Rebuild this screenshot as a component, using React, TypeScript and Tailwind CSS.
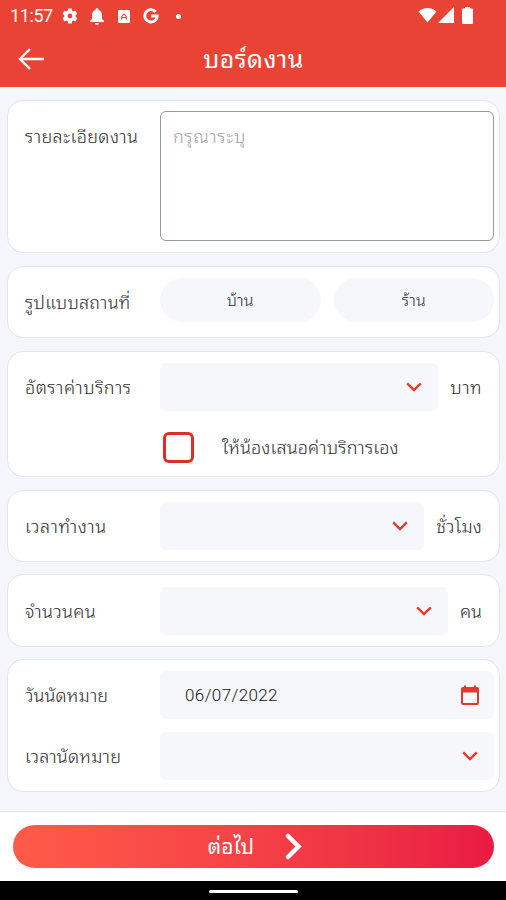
import React from 'react';

interface RowLabelProps {
  text: string;
  className?: string;
}

const RowLabel: React.FC<RowLabelProps> = ({ text, className = 'tracking-[0.35px]' }) => (
  <div className={`w-[135px] h-12 shrink-0 flex items-center whitespace-nowrap pt-px text-[18px] font-light text-[#2c2c2c] ${className}`}>
    <span>{text}</span>
  </div>
);

const Card: React.FC<{ className: string; children: React.ReactNode }> = ({ className, children }) => (
  <section className={`bg-white border border-[#e2e4ee] rounded-2xl pl-[17px] pr-[5px] pt-[11px] ${className}`}>
    {children}
  </section>
);

const Chevron: React.FC = () => (
  <svg width="16" height="10" viewBox="0 0 16 10" fill="none" stroke="#e5382c" strokeWidth="2.4" className="shrink-0">
    <path d="M1.2 1.3L8 8L14.8 1.3" />
  </svg>
);

const SelectField: React.FC = () => (
  <button className="flex-1 h-12 pr-4 rounded-md bg-[#f5f7fb] flex items-center justify-end">
    <Chevron />
  </button>
);

const Unit: React.FC<{ text: string; className: string }> = ({ text, className }) => (
  <span className={`shrink-0 whitespace-nowrap text-right pt-px text-[18px] font-light text-[#2c2c2c] pr-3 ${className}`}>{text}</span>
);

const StatusBar: React.FC = () => (
  <div className="h-8 pl-[10px] pr-[33px] flex items-center justify-between">
    <div className="flex items-center">
      <span className="w-[51px] text-[18px] leading-8 tracking-[-0.4px]">11:57</span>
      <svg width="18" height="18" viewBox="0 0 24 24" fill="white">
        <path d="M19.4 13a7.7 7.7 0 0 0 0-2l2.1-1.65a.5.5 0 0 0 .1-.64l-2-3.46a.5.5 0 0 0-.6-.22l-2.5 1a7.3 7.3 0 0 0-1.7-.98l-.4-2.65A.5.5 0 0 0 13.9 2h-4a.5.5 0 0 0-.5.42l-.4 2.63c-.6.25-1.2.58-1.7.98l-2.5-1a.5.5 0 0 0-.6.22l-2 3.46a.5.5 0 0 0 .1.64L4.4 11a7.7 7.7 0 0 0 0 2l-2.1 1.65a.5.5 0 0 0-.1.64l2 3.46c.1.22.4.3.6.22l2.5-1c.5.4 1.1.73 1.7.98l.4 2.63c0 .24.2.42.5.42h4c.2 0 .5-.18.5-.42l.4-2.63c.6-.25 1.2-.58 1.7-.98l2.5 1c.2.08.5 0 .6-.22l2-3.46a.5.5 0 0 0-.1-.64zM12 15.2a3.2 3.2 0 1 1 0-6.4a3.2 3.2 0 0 1 0 6.4z" />
      </svg>
      <svg width="16" height="18" viewBox="0 0 16 18" fill="white" className="ml-[10px]">
        <path d="M8 1a1.500 1.500 0 0 1 1.500 1.500v.5C12 3.700 13 5.800 13 8v4l2 2v1H1v-1l2-2V8c0-2.200 1-4.300 3.500-5v-.5A1.500 1.500 0 0 1 8 1zM6 16h4a2 2 0 0 1-4 0z" />
      </svg>
      <svg width="12" height="13" viewBox="0 0 12 13" className="ml-[13px]">
        <rect width="12" height="13" rx="1" fill="white" />
        <path d="M3.700 9.500V6.500L6 4L8.300 6.500V9.500M4 7.500H8" fill="none" stroke="#e84335" strokeWidth="1.1" />
      </svg>
      <svg width="16" height="16" viewBox="0 0 16 16" fill="none" stroke="white" strokeWidth="2.9" className="ml-[13px]">
        <path d="M12.700 3.800A6.200 6.200 0 1 0 14.200 8H8.300" />
      </svg>
      <span className="ml-[17px] size-[5px] rounded-full bg-white" />
    </div>
    <div className="flex items-center -mt-0.5">
      <svg width="19" height="16" viewBox="0 0 19 16" fill="white">
        <path d="M9.500 15.500L.5 4.500C5.500-.3 13.500-.3 18.500 4.500z" />
      </svg>
      <svg width="16" height="16" viewBox="0 0 16 16" fill="white" className="ml-px">
        <path d="M0 16L16 0V16z" />
      </svg>
      <svg width="11" height="17" viewBox="0 0 11 17" fill="white" className="ml-2">
        <path d="M3 1.500V0h5v1.500h2a1 1 0 0 1 1 1V16a1 1 0 0 1-1 1H1a1 1 0 0 1-1-1V2.500a1 1 0 0 1 1-1z" />
      </svg>
    </div>
  </div>
);

export default function App() {
  return (
    <div className="w-[506px] h-[900px] overflow-hidden flex flex-col bg-[#f5f6fb] font-['Roboto','Noto_Sans_Thai_Looped','Loma','Garuda','Noto_Sans_Thai','Noto_Sans',sans-serif]">
      <header className="h-[87px] shrink-0 bg-[#e84335] text-white">
        <StatusBar />
        <div className="h-[54px] grid grid-cols-[1fr_auto_1fr] items-center">
          <button className="pl-[18px]">
            <svg width="27" height="22" viewBox="0 0 27 22" fill="none" stroke="white" strokeWidth="2.4">
              <path d="M26 11H2M12 1L2 11L12 21" />
            </svg>
          </button>
          <h1 className="pt-0.5 pl-px text-[25px] leading-9 tracking-[0.4px] font-normal">บอร์ดงาน</h1>
        </div>
      </header>

      <main className="flex-1 pt-[13px] pl-[7px] pr-[6px] flex flex-col gap-[13px]">
        <Card className="h-[153px] flex">
          <RowLabel text="รายละเอียดงาน" className="tracking-[0.4px]" />
          <textarea
            placeholder="กรุณาระบุ"
            className="flex-1 h-[130px] -mt-px resize-none border border-[#949a98] rounded-md px-3 py-[13px] text-[18px] leading-6 tracking-[0.6px] font-light outline-none placeholder:text-[#a3a3a3]"
          />
        </Card>

        <Card className="h-[72px] flex">
          <RowLabel text="รูปแบบสถานที่" className="tracking-[0.25px]" />
          <div className="flex-1 flex gap-[13px]">
            <button className="flex-1 h-11 pt-0.5 rounded-full bg-[#f5f7fb] text-[16px] tracking-[0.2px] font-light text-[#2c2c2c]">บ้าน</button>
            <button className="flex-1 h-11 pt-0.5 rounded-full bg-[#f5f7fb] text-[16px] tracking-[0.2px] font-light text-[#2c2c2c]">ร้าน</button>
          </div>
        </Card>

        <Card className="h-[126px]">
          <div className="flex items-center">
            <RowLabel text="อัตราค่าบริการ" className="tracking-[0.5px]" />
            <SelectField />
            <Unit text="บาท" className="w-[56px] tracking-[0.5px]" />
          </div>
          <div className="flex items-center h-[73px] pl-[138px]">
            <span className="size-[31px] rounded-md border-[3px] border-[#dc2e22]" />
            <span className="ml-[28px] text-[18px] tracking-[0.15px] font-light text-[#2c2c2c] whitespace-nowrap">ให้น้องเสนอค่าบริการเอง</span>
          </div>
        </Card>

        <Card className="h-[72px] flex items-center pb-[11px]">
          <RowLabel text="เวลาทำงาน" className="tracking-[0.6px]" />
          <SelectField />
          <Unit text="ชั่วโมง" className="w-[70px] tracking-[0.2px]" />
        </Card>

        <Card className="h-[73px] -mt-px flex items-center pb-[11px]">
          <RowLabel text="จำนวนคน" />
          <SelectField />
          <Unit text="คน" className="w-[46px] tracking-normal" />
        </Card>

        <Card className="h-[133px] -mt-px flex flex-col gap-[13px]">
          <div className="flex">
            <RowLabel text="วันนัดหมาย" className="tracking-[0.1px]" />
            <div className="flex-1 h-12 rounded-md bg-[#f5f7fb] pl-[25px] pr-[14px] flex items-center justify-between">
              <span className="pt-0.5 text-[17px] tracking-[0.4px] font-light text-[#111]">06/07/2022</span>
              <svg width="20" height="21" viewBox="0 0 20 21" fill="#e5382c">
                <path fillRule="evenodd" d="M4 .500h2v1.500h8V.500h2v1.500h1a2 2 0 0 1 2 2v14a2 2 0 0 1-2 2H3a2 2 0 0 1-2-2V4a2 2 0 0 1 2-2h1zM3 7.500v10.500h14V7.500z" />
              </svg>
            </div>
          </div>
          <div className="flex">
            <RowLabel text="เวลานัดหมาย" className="tracking-[0.2px]" />
            <SelectField />
          </div>
        </Card>
      </main>

      <footer className="h-[70px] shrink-0 bg-white border-t border-[#e0e2e8] px-[13px] pt-[13px]">
        <button className="w-[481px] h-[43px] pl-[3px] rounded-full bg-linear-to-r from-[#ff5b49] to-[#e91a43] text-white flex items-center justify-center gap-[31px]">
          <span className="pt-0.5 text-[21px]">ต่อไป</span>
          <svg width="17" height="27" viewBox="0 0 17 27" fill="none" stroke="white" strokeWidth="4.5" strokeLinecap="round">
            <path d="M3 3L13.500 13.500L3 24" />
          </svg>
        </button>
      </footer>
      <div className="h-[19px] shrink-0 bg-black flex justify-center pt-[9px]">
        <span className="w-[89px] h-[3px] rounded-full bg-white" />
      </div>
    </div>
  );
}
